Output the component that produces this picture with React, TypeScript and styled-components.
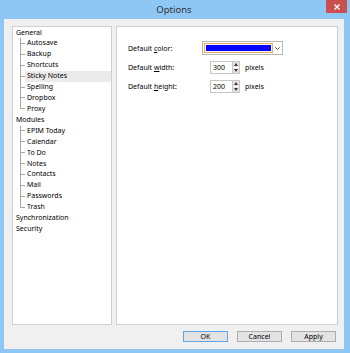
import { FC } from "react";
import styled, { createGlobalStyle } from "styled-components";

const GlobalStyle = createGlobalStyle`
  html, body { margin: 0; padding: 0; }
  body {
    width: 350px;
    height: 353px;
    overflow: hidden;
    font-family: "Noto Sans", "Open Sans", sans-serif;
    font-size: 7px;
    color: #000;
  }
`;

interface ITreeItem {
  label: string;
  children?: string[];
}

const tree: ITreeItem[] = [
  {
    label: "General",
    children: ["Autosave", "Backup", "Shortcuts", "Sticky Notes", "Spelling", "Dropbox", "Proxy"],
  },
  {
    label: "Modules",
    children: ["EPIM Today", "Calendar", "To Do", "Notes", "Contacts", "Mail", "Passwords", "Trash"],
  },
  { label: "Synchronization" },
  { label: "Security" },
];

const selected = "Sticky Notes";

const Window = styled.div`
  width: 350px;
  height: 353px;
  box-sizing: border-box;
  background: #8ec6f4;
  padding: 0 6px 4px 4px;
  display: flex;
  flex-direction: column;
`;

const TitleBar = styled.div`
  position: relative;
  height: 19px;
  display: flex;
  align-items: center;
  justify-content: center;
  font-size: 9.5px;
  color: #333;
`;

const CloseButton = styled.div`
  position: absolute;
  top: 0;
  right: -3px;
  width: 21px;
  height: 13px;
  background: #c9504f;
  display: flex;
  align-items: center;
  justify-content: center;
`;

const Client = styled.div`
  flex: 1;
  background: #f0f0f0;
  display: flex;
  flex-direction: column;
  padding: 7px 6px 7px 8px;
  gap: 6px;
`;

const Panels = styled.div`
  height: 299px;
  display: flex;
  gap: 4px;
`;

const TreePanel = styled.div`
  width: 100px;
  box-sizing: border-box;
  background: #fff;
  border: 1px solid #cfcfcf;
  padding-top: 0.5px;
`;

const Row = styled.div`
  height: 10.93px;
  display: flex;
  align-items: stretch;
`;

const TopLabel = styled.span`
  padding-left: 3px;
  line-height: 10.93px;
  white-space: nowrap;
`;

const Connector = styled.span<{ $last: boolean }>`
  margin-left: 7px;
  width: 5px;
  display: flex;
  flex-direction: column;

  &::before {
    content: "";
    height: 50%;
    border-left: 1px solid #a9a9a9;
    border-bottom: 1px solid #a9a9a9;
    box-sizing: border-box;
  }

  &::after {
    content: "";
    flex: 1;
    border-left: 1px solid ${(p) => (p.$last ? "transparent" : "#a9a9a9")};
  }
`;

const ChildLabel = styled.span<{ $selected: boolean }>`
  flex: 1;
  padding-left: 2px;
  line-height: 10.93px;
  white-space: nowrap;
  background: ${(p) => (p.$selected ? "#ebebeb" : "transparent")};
`;

const SettingsPanel = styled.div`
  flex: 1;
  box-sizing: border-box;
  background: #fff;
  border: 1px solid #cfcfcf;
  padding: 14px 0 0 11px;
  display: grid;
  grid-template-columns: 74px auto;
  grid-auto-rows: min-content;
  row-gap: 6px;
  align-items: center;
`;

const Label = styled.span`
  white-space: nowrap;
`;

const Combo = styled.div`
  width: 81px;
  height: 14px;
  box-sizing: border-box;
  border: 1px solid #b5b5b5;
  background: #fff;
  display: flex;
  align-items: center;
  padding: 1px;
`;

const Swatch = styled.div<{ $color: string }>`
  width: 69px;
  height: 100%;
  box-sizing: border-box;
  border: 1px solid #e8a862;
  padding: 1px;
  &::before {
    content: "";
    display: block;
    height: 100%;
    background: ${(p) => p.$color};
  }
`;

const Chevron = styled.div`
  flex: 1;
  display: flex;
  justify-content: center;
  align-items: center;
`;

const SpinRow = styled.div`
  display: flex;
  align-items: center;
  margin-left: 8px;
`;

const SpinInput = styled.div`
  width: 22px;
  height: 13px;
  box-sizing: border-box;
  border: 1px solid #c6c6c6;
  border-right: none;
  background: #fff;
  padding-left: 2px;
  line-height: 11px;
`;

const SpinButtons = styled.div`
  width: 8px;
  height: 13px;
  box-sizing: border-box;
  border: 1px solid #c6c6c6;
  display: flex;
  flex-direction: column;
  gap: 1px;
  background: #fff;
`;

const SpinHalf = styled.div`
  flex: 1;
  background: #e4e4e4;
  display: flex;
  align-items: center;
  justify-content: center;
`;

const Unit = styled.span`
  margin-left: 5px;
`;

const ButtonBar = styled.div`
  display: flex;
  justify-content: flex-end;
  gap: 9px;
  padding-right: 2px;
`;

const Button = styled.div<{ $default?: boolean }>`
  width: 45px;
  height: 11px;
  box-sizing: border-box;
  border: 1px solid ${(p) => (p.$default ? "#5ea6e6" : "#adadad")};
  background: #e3e3e3;
  display: flex;
  align-items: center;
  justify-content: center;
  font-size: 7px;
`;

const Arrow: FC<{ up?: boolean }> = ({ up }) => (
  <svg width="4" height="3" viewBox="0 0 4 3">
    <path d={up ? "M0 3 L2 0 L4 3 Z" : "M0 0 L4 0 L2 3 Z"} fill="#3a3a3a" />
  </svg>
);

const Spin: FC<{ value: number }> = ({ value }) => (
  <SpinRow>
    <SpinInput>{value}</SpinInput>
    <SpinButtons>
      <SpinHalf>
        <Arrow up />
      </SpinHalf>
      <SpinHalf>
        <Arrow />
      </SpinHalf>
    </SpinButtons>
    <Unit>pixels</Unit>
  </SpinRow>
);

export default function App() {
  return (
    <>
      <GlobalStyle />
      <Window>
        <TitleBar>
          Options
          <CloseButton>
            <svg width="6" height="6" viewBox="0 0 6 6">
              <path d="M0.5 0.5 L5.5 5.5 M5.5 0.5 L0.5 5.5" stroke="#fff" strokeWidth="1.4" />
            </svg>
          </CloseButton>
        </TitleBar>
        <Client>
          <Panels>
            <TreePanel>
              {tree.map((item) => (
                <div key={item.label}>
                  <Row>
                    <TopLabel>{item.label}</TopLabel>
                  </Row>
                  {item.children?.map((child, i) => (
                    <Row key={child}>
                      <Connector $last={i === item.children!.length - 1} />
                      <ChildLabel $selected={child === selected}>{child}</ChildLabel>
                    </Row>
                  ))}
                </div>
              ))}
            </TreePanel>
            <SettingsPanel>
              <Label>
                Default <u>c</u>olor:
              </Label>
              <Combo>
                <Swatch $color="#0000ff" />
                <Chevron>
                  <svg width="5" height="3" viewBox="0 0 5 3">
                    <path d="M0.3 0.3 L2.5 2.5 L4.7 0.3" stroke="#444" strokeWidth="0.9" fill="none" />
                  </svg>
                </Chevron>
              </Combo>
              <Label>
                Default <u>w</u>idth:
              </Label>
              <Spin value={300} />
              <Label>
                Default <u>h</u>eight:
              </Label>
              <Spin value={200} />
            </SettingsPanel>
          </Panels>
          <ButtonBar>
            <Button $default>OK</Button>
            <Button>Cancel</Button>
            <Button>Apply</Button>
          </ButtonBar>
        </Client>
      </Window>
    </>
  );
}
